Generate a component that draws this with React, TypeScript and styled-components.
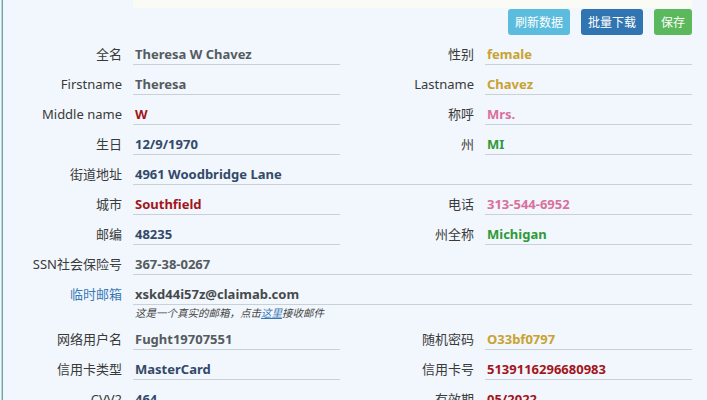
import React from "react";
import styled, { createGlobalStyle } from "styled-components";

const Global = createGlobalStyle`
  html, body { margin: 0; padding: 0; background: #f1f7fc; overflow: hidden; }
  body { font-family: "Noto Sans", "Noto Sans CJK SC", sans-serif; }
`;

const Page = styled.div`
  margin-left: 2px;
  border-left: 1px solid #6ea7a3;
  box-shadow: -1px 0 0 #b9d6d3;
  min-height: 400px;
  padding-right: 15px;
  box-sizing: border-box;
  width: 705px;
`;

const TopStrip = styled.div`
  margin-left: 130px;
  height: 8px;
  background: #fbfbf6;
`;

const Toolbar = styled.div`
  display: flex;
  justify-content: flex-end;
  gap: 11px;
  padding-top: 1px;
`;

const Btn = styled.button<{ $bg: string }>`
  height: 26px;
  padding: 0 7px;
  border: none;
  border-radius: 3px;
  background: ${(p) => p.$bg};
  color: #fff;
  font-family: "Noto Sans CJK SC", sans-serif;
  font-size: 12px;
  line-height: 26px;
`;

const Row = styled.div`
  display: flex;
  gap: 15px;
`;

const Pair = styled.div<{ $full?: boolean }>`
  display: flex;
  width: ${(p) => (p.$full ? "auto" : "337px")};
  flex: ${(p) => (p.$full ? "1" : "none")};
`;

const Label = styled.div<{ $blue?: boolean }>`
  width: 130px;
  flex: none;
  box-sizing: border-box;
  padding: 10px 11px 0 0;
  text-align: right;
  font-size: 13px;
  line-height: 18px;
  color: ${(p) => (p.$blue ? "#3a78b6" : "#3a3a3a")};
  font-family: "Noto Sans", "Noto Sans CJK SC", sans-serif;
`;

const FieldCol = styled.div`
  flex: 1;
  display: flex;
  flex-direction: column;
`;

const Value = styled.div<{ $c: string }>`
  padding: 10px 0 1px 2px;
  line-height: 18px;
  font-size: 13px;
  font-weight: 700;
  color: ${(p) => p.$c};
  border-bottom: 1px solid #c9d0d6;
`;

const Note = styled.div`
  padding-left: 2px;
  height: 15px;
  line-height: 15px;
  font-size: 10.5px;
  font-style: italic;
  color: #444;
  font-family: "Noto Sans CJK SC", sans-serif;
  a { color: #3a78b6; text-decoration: underline; }
`;

const C = {
  gray: "#555b60",
  red: "#a3151b",
  gold: "#c9a232",
  pink: "#d9709d",
  navy: "#33496a",
  green: "#2e9a3a",
  dark: "#46494c",
};

type F = { label: string; value: string; color: string; blue?: boolean };

const Field = ({ f, full, note }: { f: F; full?: boolean; note?: React.ReactNode }) => (
  <Pair $full={full}>
    <Label $blue={f.blue}>{f.label}</Label>
    <FieldCol>
      <Value $c={f.color}>{f.value}</Value>
      {note}
    </FieldCol>
  </Pair>
);

const rows: F[][] = [
  [
    { label: "全名", value: "Theresa W Chavez", color: C.gray },
    { label: "性别", value: "female", color: C.gold },
  ],
  [
    { label: "Firstname", value: "Theresa", color: C.gray },
    { label: "Lastname", value: "Chavez", color: C.gold },
  ],
  [
    { label: "Middle name", value: "W", color: C.red },
    { label: "称呼", value: "Mrs.", color: C.pink },
  ],
  [
    { label: "生日", value: "12/9/1970", color: C.navy },
    { label: "州", value: "MI", color: C.green },
  ],
];

const rows2: F[][] = [
  [
    { label: "城市", value: "Southfield", color: C.red },
    { label: "电话", value: "313-544-6952", color: C.pink },
  ],
  [
    { label: "邮编", value: "48235", color: C.navy },
    { label: "州全称", value: "Michigan", color: C.green },
  ],
];

const rows3: F[][] = [
  [
    { label: "网络用户名", value: "Fught19707551", color: C.gray },
    { label: "随机密码", value: "O33bf0797", color: C.gold },
  ],
  [
    { label: "信用卡类型", value: "MasterCard", color: C.navy },
    { label: "信用卡号", value: "5139116296680983", color: C.red },
  ],
  [
    { label: "CVV2", value: "464", color: C.navy },
    { label: "有效期", value: "05/2022", color: C.red },
  ],
];

const renderPairs = (list: F[][]) =>
  list.map((r, i) => (
    <Row key={i}>
      {r.map((f, j) => (
        <Field key={j} f={f} />
      ))}
    </Row>
  ));

export default function App() {
  return (
    <>
      <Global />
      <Page>
        <TopStrip />
        <Toolbar>
          <Btn $bg="#5bbcdd">刷新数据</Btn>
          <Btn $bg="#3075b1">批量下载</Btn>
          <Btn $bg="#5cb85c">保存</Btn>
        </Toolbar>
        {renderPairs(rows)}
        <Row>
          <Field full f={{ label: "街道地址", value: "4961 Woodbridge Lane", color: C.navy }} />
        </Row>
        {renderPairs(rows2)}
        <Row>
          <Field full f={{ label: "SSN社会保险号", value: "367-38-0267", color: C.gray }} />
        </Row>
        <Row>
          <Field
            full
            f={{ label: "临时邮箱", value: "xskd44i57z@claimab.com", color: C.dark, blue: true }}
            note={
              <Note>
                这是一个真实的邮箱，点击<a>这里</a>接收邮件
              </Note>
            }
          />
        </Row>
        {renderPairs(rows3)}
      </Page>
    </>
  );
}
